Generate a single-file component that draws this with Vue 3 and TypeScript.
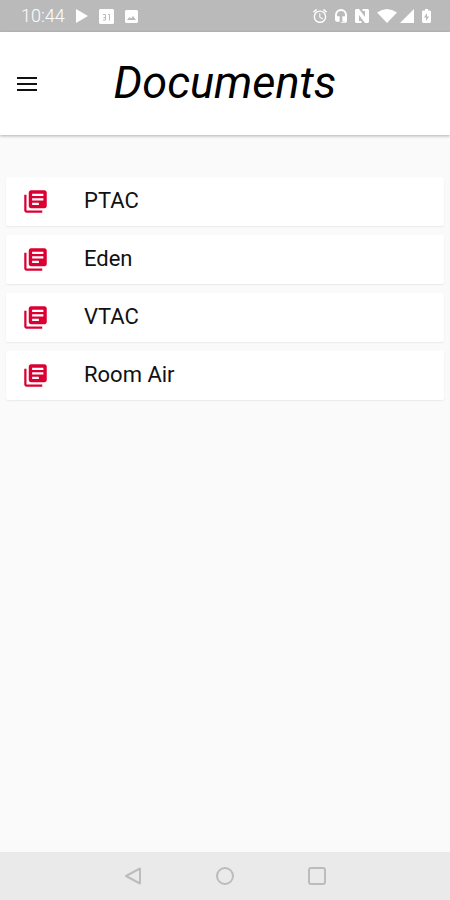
<script setup lang="ts">
interface DocumentGroup {
  id: number
  name: string
}

const groups: DocumentGroup[] = [
  { id: 1, name: 'PTAC' },
  { id: 2, name: 'Eden' },
  { id: 3, name: 'VTAC' },
  { id: 4, name: 'Room Air' },
]
</script>

<template>
  <div class="screen">
    <div class="status">
      <div class="status-left">
        <span class="clock">10:44</span>
        <svg width="12" height="14" viewBox="0 0 12 14"><path d="M0 0L12 7L0 14Z" /></svg>
        <svg class="calendar" width="15" height="15" viewBox="0 0 15 15">
          <path d="M1 0H14L15 1V14L14 15H1L0 14V1Z" />
          <path class="mark" d="M4 5.500H6.500V11M4.500 8.500H6.500M4 11H6.500M9 5.500H10.500V11.500" />
        </svg>
        <svg width="13" height="13" viewBox="0 0 13 13">
          <path fill-rule="evenodd" d="M1 0H12L13 1V12L12 13H1L0 12V1ZM2 10H11L8 6L6 8.500L4.500 7Z" />
        </svg>
      </div>
      <div class="status-right">
        <svg width="14" height="14" viewBox="2 2 20 20">
          <path d="M22 5.720l-4.600-3.860-1.290 1.530 4.600 3.860L22 5.720zM7.880 3.390L6.600 1.860 2 5.710l1.290 1.530 4.590-3.850zM12.500 8H11v6l4.750 2.850.750-1.230-4-2.370V8zM12 4c-4.970 0-9 4.030-9 9s4.020 9 9 9a9 9 0 0 0 0-18zm0 16c-3.870 0-7-3.130-7-7s3.130-7 7-7 7 3.130 7 7-3.130 7-7 7z" />
        </svg>
        <svg width="14" height="14" viewBox="2 2 20 21">
          <path d="M12 2a9 9 0 0 0-9 9v7a3 3 0 0 0 3 3h4v-8H6v-2a6 6 0 0 1 12 0v2h-4v8h4v1h-6v1h6a3 3 0 0 0 3-3v-9a9 9 0 0 0-9-9z" />
        </svg>
        <svg width="14" height="14" viewBox="0 0 14 14">
          <path d="M1 0H4L10 8V2H7.500V0H13L14 1V13L13 14H10L4 6V12H6.500V14H1L0 13V1Z" />
        </svg>
        <svg class="wifi" width="20" height="14" viewBox="0 0 20 14"><path d="M0 3.500Q10-3.500 20 3.500L10 14Z" /></svg>
        <svg width="14" height="14" viewBox="0 0 14 14"><path d="M14 0V14H0Z" /></svg>
        <svg class="battery" width="9" height="14" viewBox="0 0 9 14">
          <path fill-rule="evenodd" d="M3 0H6V1.500H8L9 2.500V13L8 14H1L0 13V2.500L1 1.500H3ZM5 4L2 8.500H4V12L7 7.500H5Z" />
        </svg>
      </div>
    </div>

    <header class="app-bar">
      <button class="menu" type="button" aria-label="Menu">
        <svg width="20" height="14" viewBox="0 0 20 14"><path d="M0 0H20V2H0ZM0 6H20V8H0ZM0 12H20V14H0Z" /></svg>
      </button>
      <h1>Documents</h1>
    </header>

    <main class="content">
      <ul class="list">
        <li v-for="group in groups" :key="group.id">
          <button class="card" type="button">
            <svg width="27" height="27" viewBox="0 0 24 24">
              <path d="M4 6H2v14c0 1.100.900 2 2 2h14v-2H4V6zm16-4H8c-1.100 0-2 .900-2 2v12c0 1.100.900 2 2 2h12c1.100 0 2-.900 2-2V4c0-1.100-.900-2-2-2zm-1 9H9V9h10v2zm-4 4H9v-2h6v2zm4-8H9V5h10v2z" />
            </svg>
            <span>{{ group.name }}</span>
          </button>
        </li>
      </ul>
    </main>

    <nav class="system-nav">
      <button type="button" aria-label="Back">
        <svg width="18" height="18" viewBox="0 0 18 18"><path d="M16 1.500V16.500L2 9Z" /></svg>
      </button>
      <button type="button" aria-label="Home">
        <svg width="18" height="18" viewBox="0 0 18 18"><circle cx="9" cy="9" r="8" /></svg>
      </button>
      <button type="button" aria-label="Recent apps">
        <svg width="18" height="18" viewBox="0 0 18 18"><rect x="1" y="1" width="16" height="16" rx="2" /></svg>
      </button>
    </nav>
  </div>
</template>

<style>
body {
  margin: 0;
}
</style>

<style scoped>
.screen {
  display: flex;
  flex-direction: column;
  min-height: 100vh;
  background: #fafafa;
  color: #111;
  font-family: Roboto, "Liberation Sans", sans-serif;
}

svg {
  display: block;
  flex: none;
}

button {
  border: 0;
  padding: 0;
  background: none;
  color: inherit;
  font: inherit;
}

.status {
  display: flex;
  align-items: center;
  justify-content: space-between;
  height: 32px;
  padding: 0 19px 0 21px;
  background: #bababa;
  color: #fff;
}

.status svg {
  fill: #fff;
}

.status-left,
.status-right {
  display: flex;
  align-items: center;
}

.status-left {
  gap: 11px;
}

.status-right {
  gap: 7px;
}

.status-right .wifi {
  margin-left: 1px;
  margin-right: -4px;
}

.status-right .battery {
  margin-left: 1px;
}

.clock {
  font-size: 18px;
  font-weight: 300;
  line-height: 20px;
}

.calendar .mark {
  fill: none;
  stroke: #bababa;
}

.app-bar {
  display: grid;
  grid-template-columns: 52px 1fr 52px;
  align-items: center;
  height: 103px;
  background: #fff;
  box-shadow: 0 1px 3px rgba(0, 0, 0, 0.3);
}

.menu {
  display: flex;
  align-items: center;
  padding-left: 17px;
  height: 48px;
}

.menu svg {
  fill: #111;
}

h1 {
  margin: 0;
  padding-bottom: 2px;
  color: #000;
  font-size: 45px;
  font-style: italic;
  font-weight: 400;
  line-height: 52px;
  text-align: center;
}

.content {
  flex: 1;
  padding: 42px 6px 0;
}

.list {
  display: flex;
  flex-direction: column;
  gap: 9px;
  margin: 0;
  padding: 0;
  list-style: none;
}

.card {
  display: flex;
  align-items: center;
  gap: 35px;
  width: 100%;
  height: 49px;
  padding: 0 16px 1px;
  border-radius: 2px;
  background: #fff;
  box-shadow: 0 1px 2px rgba(0, 0, 0, 0.07);
  font-size: 22px;
  line-height: 28px;
  text-align: left;
}

.card svg {
  fill: #dc0032;
}

.system-nav {
  display: flex;
  align-items: center;
  justify-content: center;
  gap: 44px;
  height: 48px;
  background: #eaeaea;
}

.system-nav button {
  display: grid;
  place-items: center;
  width: 48px;
  height: 48px;
}

.system-nav svg {
  fill: none;
  stroke: #bcbcbc;
  stroke-width: 2;
  stroke-linejoin: round;
}
</style>
